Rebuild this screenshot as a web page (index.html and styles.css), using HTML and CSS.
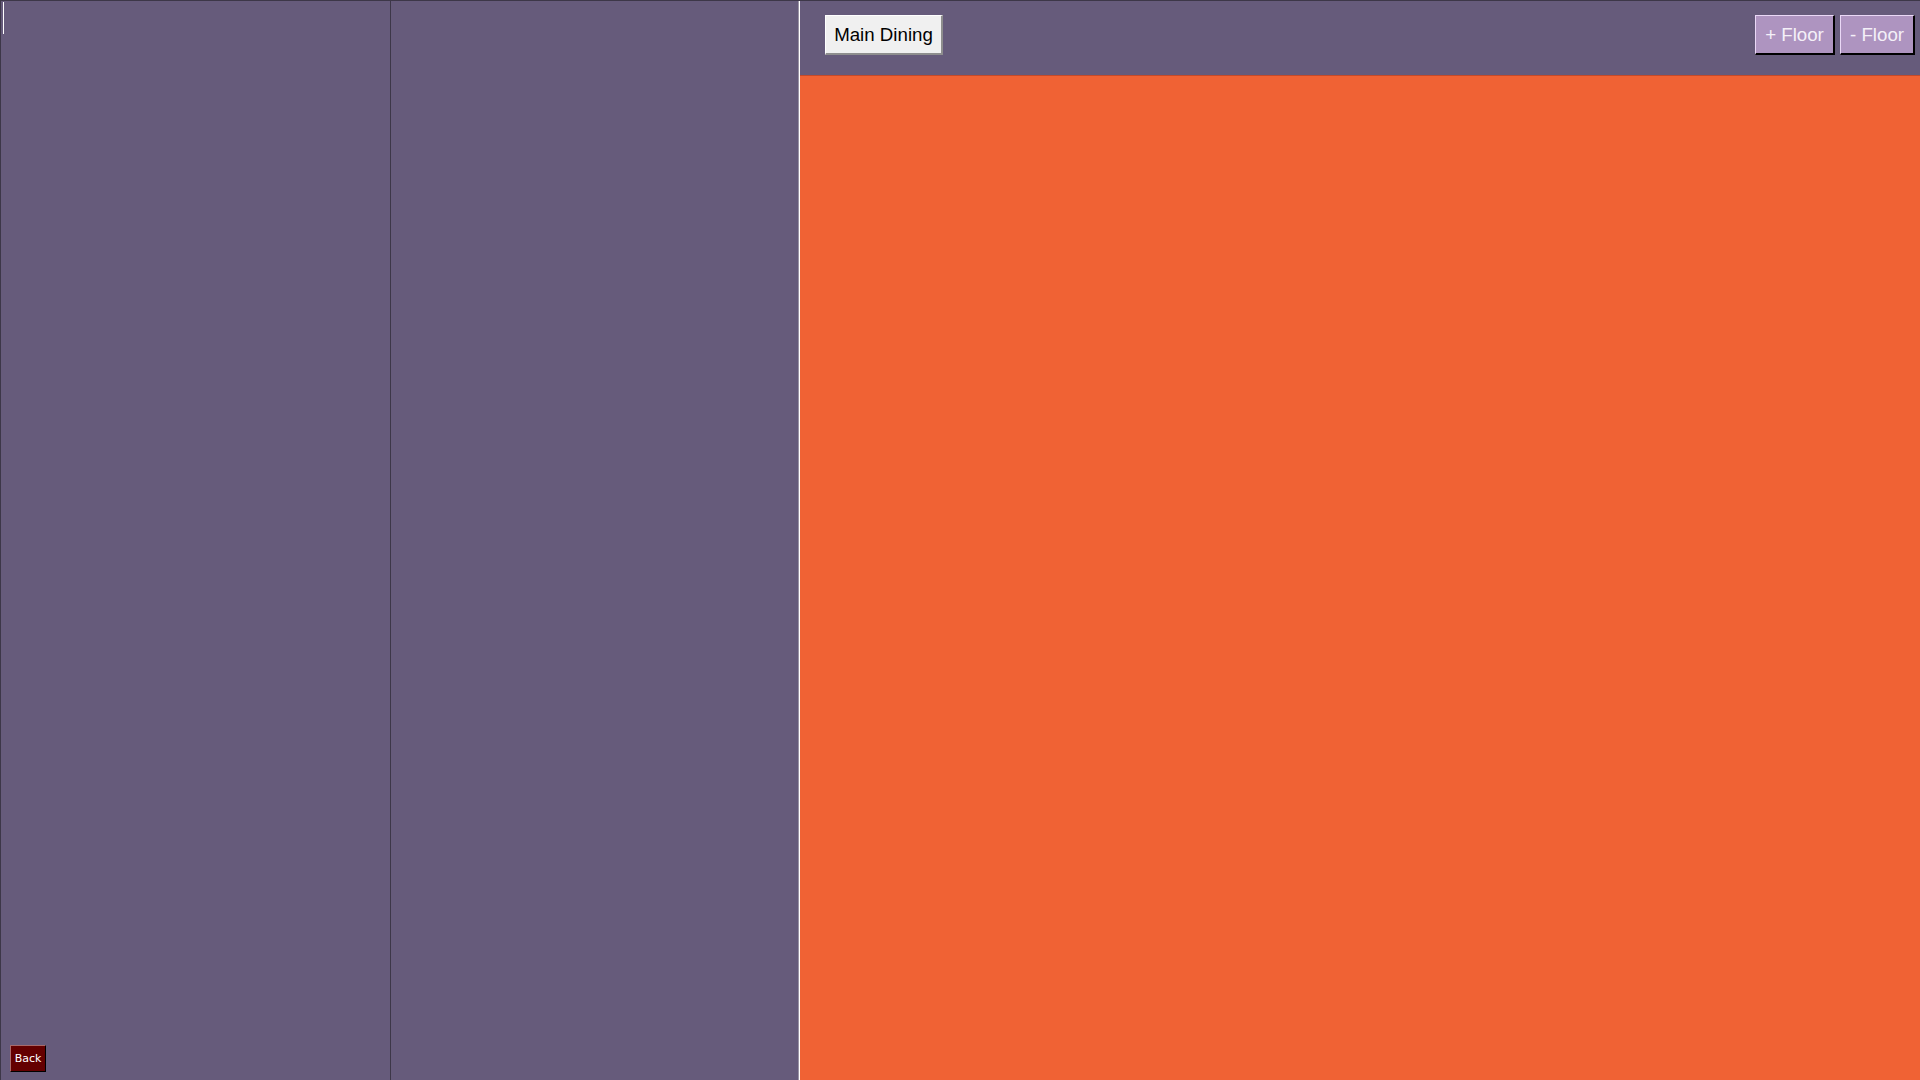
FILE: index.html
```html
<!DOCTYPE html>
<html>
<head>
<meta charset="utf-8">
<link rel="stylesheet" href="styles.css">
</head>
<body>
<div class="app">
  <div class="col col-left">
    <div class="caret"></div>
    <div class="spacer"></div>
    <button class="btn-back">Back</button>
  </div>
  <div class="col col-mid"></div>
  <div class="col col-right">
    <div class="header">
      <button class="btn-floor-name">Main Dining</button>
      <div class="header-actions">
        <button class="btn-floor">+ Floor</button>
        <button class="btn-floor">- Floor</button>
      </div>
    </div>
    <div class="canvas"></div>
  </div>
</div>
</body>
</html>
```
FILE: styles.css
```css
html, body {
  margin: 0;
  padding: 0;
  width: 1920px;
  height: 1080px;
  overflow: hidden;
  background: #665b7b;
  font-family: "Liberation Sans", Arial, sans-serif;
}
.app {
  display: flex;
  width: 1920px;
  height: 1080px;
  box-sizing: border-box;
  border-top: 1px solid #3d3748;
}
.col {
  height: 100%;
  box-sizing: border-box;
}
.col-left {
  width: 391px;
  border-left: 1px solid #3d3748;
  border-right: 1px solid #3d3748;
  display: flex;
  flex-direction: column;
  padding: 1px 0 8px 9px;
}
.caret {
  width: 1px;
  height: 32px;
  background: #ffffff;
  margin-left: -7px;
}
.spacer { flex: 1; }
.btn-back {
  align-self: flex-start;
  width: 36px;
  height: 27px;
  padding: 0;
  background: #640000;
  color: #ffffff;
  font-family: "DejaVu Sans", Verdana, sans-serif;
  font-size: 11px;
  border-style: solid;
  border-width: 1px;
  border-color: #a86a6a #000000 #000000 #a86a6a;
}
.col-mid {
  width: 408px;
  border-right: 1px solid #9a94a4;
}
.col-right {
  flex: 1;
  display: flex;
  flex-direction: column;
  border-left: 1px solid #ffffff;
}
.header {
  height: 74px;
  display: flex;
  align-items: flex-start;
  padding: 14px 5px 0 25px;
  box-sizing: border-box;
}
.btn-floor-name {
  width: 118px;
  height: 40px;
  padding: 0;
  background: #f0f0f0;
  color: #000000;
  font-family: "Liberation Sans", Arial, sans-serif;
  font-size: 18.7px;
  border-style: solid;
  border-width: 1px 2px 2px 1px;
  border-color: #ffffff #8e8e8e #8e8e8e #ffffff;
}
.header-actions {
  margin-left: auto;
  display: flex;
  gap: 5px;
}
.btn-floor {
  height: 40px;
  padding: 0 8px;
  background: #ae94c0;
  color: #f4f0f8;
  font-family: "Liberation Sans", Arial, sans-serif;
  font-size: 18.7px;
  border-style: solid;
  border-width: 1px 2px 2px 1px;
  border-color: #ead8f6 #000000 #000000 #ead8f6;
}
.btn-floor:first-child { width: 80px; }
.btn-floor:last-child { width: 75px; }
.canvas {
  flex: 1;
  background: #f06234;
  border-top: 1px solid #c44a2a;
}
```
